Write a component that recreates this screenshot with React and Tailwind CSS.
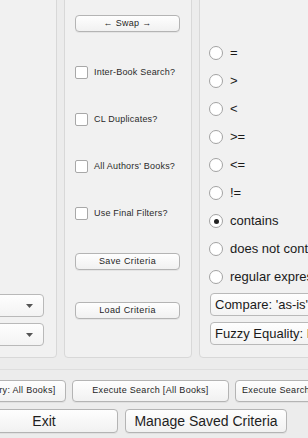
import React from "react";

const btn =
  "flex items-center justify-center rounded-[4px] border border-[#b4b4b4] bg-gradient-to-b from-[#fefefe] to-[#f1f1f1] text-[#1e1e1e] shadow-[0_1px_0_rgba(0,0,0,0.05)]";

const Checkbox = ({ label }) => (
  <div className="mt-[34px] flex h-[13px] items-center">
    <span className="h-[13px] w-[13px] shrink-0 rounded-[2px] border border-[#a8a8a8] bg-white" />
    <span className="ml-[6px] whitespace-nowrap text-[9px] tracking-[0.2px] text-[#2a2a2a]">
      {label}
    </span>
  </div>
);

const Radio = ({ label, checked }) => (
  <div className="flex h-[28px] items-center">
    <span className="flex h-[14px] w-[14px] shrink-0 items-center justify-center rounded-full border border-[#a3a3a3] bg-white">
      {checked ? <span className="h-[5px] w-[5px] rounded-full bg-[#222]" /> : null}
    </span>
    <span className="ml-[7px] whitespace-nowrap text-[13px] text-[#1a1a1a]">{label}</span>
  </div>
);

const Combo = ({ text, arrow }) => (
  <div className="flex h-[23px] items-center rounded-[4px] border border-[#b9b9b9] bg-gradient-to-b from-[#fefefe] to-[#f3f3f3] px-[4px]">
    <span className="flex-1 whitespace-nowrap text-[13px] text-[#1a1a1a]">{text}</span>
    {arrow ? (
      <svg width="7" height="4" viewBox="0 0 7 4" className="mr-[6px]">
        <path d="M0 0h7L3.5 4z" fill="#555" />
      </svg>
    ) : null}
  </div>
);

const operators = ["=", ">", "<", ">=", "<=", "!=", "contains", "does not contain", "regular expression"];

export default function App() {
  return (
    <div
      className="h-[438px] w-[308px] overflow-hidden bg-[#ececec]"
      style={{ fontFamily: '"Liberation Sans", Arial, sans-serif' }}
    >
      <div className="-ml-[200px] -mt-[10px] flex h-[368px] gap-[7px]">
        <div className="flex w-[257px] shrink-0 flex-col justify-end gap-[6px] rounded-[4px] border border-[#d8d8d8] bg-[#f1f1f1] pb-[11px] pr-[12px]">
          <Combo arrow />
          <Combo arrow />
        </div>

        <div className="flex w-[128px] shrink-0 flex-col rounded-[4px] border border-[#d8d8d8] bg-[#f1f1f1] pl-[10px] pr-[11px] pt-[24px]">
          <button className={`${btn} h-[17px] text-[9px] tracking-[0.3px]`}>← Swap →</button>
          <Checkbox label="Inter-Book Search?" />
          <Checkbox label="CL Duplicates?" />
          <Checkbox label="All Authors' Books?" />
          <Checkbox label="Use Final Filters?" />
          <button className={`${btn} mt-[33px] h-[17px] text-[9px] tracking-[0.4px]`}>Save Criteria</button>
          <button className={`${btn} mt-[32px] h-[17px] text-[9px] tracking-[0.4px]`}>Load Criteria</button>
        </div>

        <div className="flex w-[200px] shrink-0 flex-col rounded-[4px] border border-[#d8d8d8] bg-[#f1f1f1] pl-[9px] pt-[48px]">
          {operators.map((op) => (
            <Radio key={op} label={op} checked={op === "contains"} />
          ))}
          <div className="mt-[2px] flex flex-col gap-[6px] pl-[1px]">
            <Combo text="Compare: 'as-is'" />
            <Combo text="Fuzzy Equality: None" />
          </div>
        </div>
      </div>

      <div className="mt-[11px] h-px bg-[#dedede]" />

      <div className="-ml-[106px] mt-[10px] flex gap-[6px]">
        <button className={`${btn} h-[22px] w-[172px] shrink-0 text-[9px] tracking-[0.3px]`}>
          Execute Search [Library: All Books]
        </button>
        <button className={`${btn} h-[22px] w-[157px] shrink-0 text-[9px] tracking-[0.3px]`}>
          Execute Search [All Books]
        </button>
        <button className={`${btn} h-[22px] w-[157px] shrink-0 text-[9px] tracking-[0.3px]`}>
          Execute Search [Selected Books]
        </button>
      </div>

      <div className="-ml-[30px] mt-[7px] flex gap-[7px]">
        <button className={`${btn} h-[24px] w-[148px] shrink-0 border-[#6d9fd6] text-[14px]`}>
          Exit
        </button>
        <button className={`${btn} h-[24px] w-[162px] shrink-0 text-[14px]`}>
          Manage Saved Criteria
        </button>
      </div>
    </div>
  );
}
